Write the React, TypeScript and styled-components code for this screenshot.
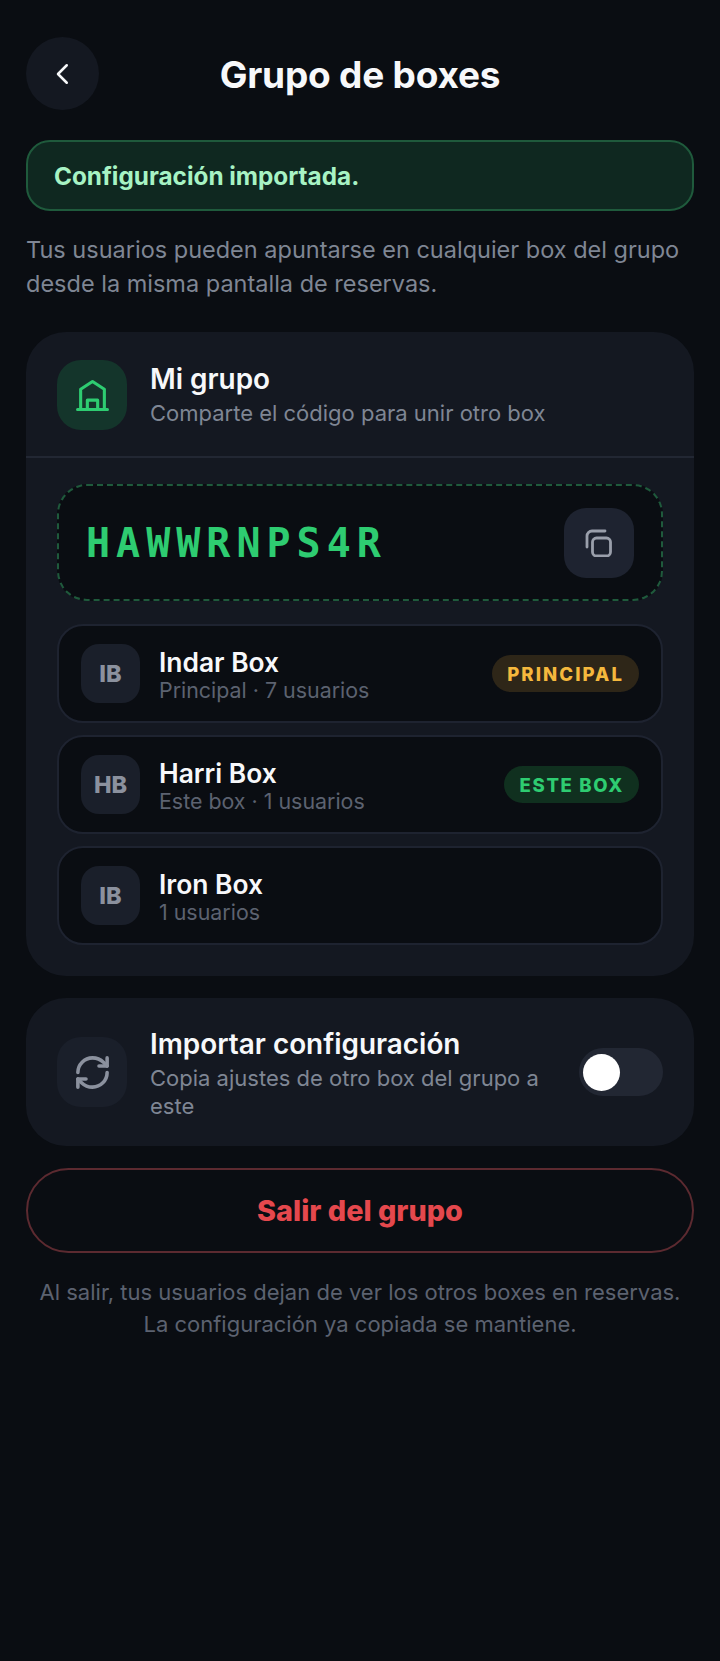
import styled, { createGlobalStyle } from 'styled-components';
import { RefreshCw } from 'lucide-react';

const GlobalStyle = createGlobalStyle`
  html, body {
    margin: 0;
    padding: 0;
    background: #0a0d12;
  }
  * { box-sizing: border-box; }
`;

const Page = styled.div`
  width: 720px;
  min-height: 1661px;
  padding: 37px 26px 0;
  background: #0a0d12;
  font-family: Inter, 'Noto Sans', sans-serif;
  color: #f7f8fa;
`;

const Header = styled.header`
  position: relative;
  display: flex;
  align-items: center;
  justify-content: center;
  height: 73px;
  margin-bottom: 30px;
`;

const BackButton = styled.button`
  position: absolute;
  left: 0;
  top: 0;
  width: 73px;
  height: 73px;
  border: 0;
  border-radius: 50%;
  background: #141821;
  color: #f7f8fa;
  display: flex;
  align-items: center;
  justify-content: center;
  padding: 0;
`;

const Title = styled.h1`
  margin: 0;
  padding-top: 2px;
  font-size: 37px;
  line-height: 48px;
  font-weight: 700;
  letter-spacing: -0.2px;
`;

const Banner = styled.div`
  height: 71px;
  display: flex;
  align-items: center;
  padding: 0 26px;
  border: 2px solid #1f5a3c;
  border-radius: 24px;
  background: #0f2820;
  color: #a7f3c4;
  font-size: 24.3px;
  font-weight: 700;
  margin-bottom: 22px;
`;

const Intro = styled.p`
  margin: 0 0 31px;
  font-size: 23.5px;
  line-height: 34px;
  color: #7f8694;
`;

const Card = styled.section`
  background: #141821;
  border-radius: 40px;
  margin-bottom: 22px;
`;

const CardHead = styled.div`
  display: flex;
  align-items: center;
  gap: 23px;
  padding: 28px 31px 26px;
  border-bottom: 2px solid #222733;
`;

const IconTile = styled.div<{ $tone: 'green' | 'grey' }>`
  flex: none;
  width: 70px;
  height: 70px;
  border-radius: 24px;
  display: flex;
  align-items: center;
  justify-content: center;
  background: ${p => (p.$tone === 'green' ? '#14352b' : '#1a1f2a')};
  color: ${p => (p.$tone === 'green' ? '#2ecc71' : '#8b919e')};
`;

const HeadText = styled.div`
  flex: 1;
  min-width: 0;
`;

const ImportText = styled(HeadText)`
  padding-top: 3px;
`;

const CardTitle = styled.div`
  font-size: 27.9px;
  line-height: 32px;
  font-weight: 600;
  color: #f7f8fa;
`;

const CardSub = styled.div`
  font-size: 22px;
  line-height: 28px;
  color: #7f8694;
  margin-top: 4px;
`;

const CardBody = styled.div`
  padding: 26px 31px 31px;
  display: flex;
  flex-direction: column;
  gap: 12px;
`;

const CodeBox = styled.div`
  height: 117px;
  display: flex;
  align-items: center;
  justify-content: space-between;
  padding: 0 27px;
  margin-bottom: 11px;
  border: 2px dashed #1f5a3c;
  border-radius: 30px;
  background: #0a0d12;
`;

const Code = styled.span`
  font-family: 'DejaVu Sans Mono', 'Liberation Mono', monospace;
  font-size: 40px;
  font-weight: 700;
  letter-spacing: 6px;
  color: #2ecc71;
`;

const CopyButton = styled.button`
  width: 70px;
  height: 70px;
  border: 0;
  padding: 0;
  border-radius: 22px;
  background: #1e2330;
  color: #9a9fab;
  display: flex;
  align-items: center;
  justify-content: center;
`;

const BoxRow = styled.div`
  height: 99px;
  display: flex;
  align-items: center;
  gap: 19px;
  padding: 0 22px;
  border: 2px solid #1e2330;
  border-radius: 26px;
  background: #0a0d12;
`;

const Avatar = styled.div`
  flex: none;
  width: 59px;
  height: 59px;
  border-radius: 18px;
  background: #1a1f2a;
  color: #8b919e;
  font-size: 23.5px;
  font-weight: 800;
  display: flex;
  align-items: center;
  justify-content: center;
`;

const BoxInfo = styled.div`
  flex: 1;
  min-width: 0;
  padding-top: 4px;
`;

const BoxName = styled.div`
  font-size: 26.4px;
  line-height: 30px;
  font-weight: 600;
  color: #f7f8fa;
`;

const BoxMeta = styled.div`
  font-size: 21.4px;
  line-height: 27px;
  color: #5c6270;
`;

const Badge = styled.span<{ $tone: 'amber' | 'green' }>`
  flex: none;
  height: 37px;
  display: flex;
  align-items: center;
  padding: 0 15px;
  border-radius: 19px;
  font-size: 18.5px;
  font-weight: 800;
  letter-spacing: ${p => (p.$tone === 'amber' ? '2.1px' : '1.7px')};
  background: ${p => (p.$tone === 'amber' ? '#2e2618' : '#10301f')};
  color: ${p => (p.$tone === 'amber' ? '#f5b83d' : '#2ecc71')};
`;

const ImportCard = styled(Card)`
  display: flex;
  align-items: center;
  gap: 23px;
  height: 148px;
  padding: 0 31px;
  margin-bottom: 22px;
`;

const Toggle = styled.div`
  flex: none;
  position: relative;
  width: 84px;
  height: 48px;
  border-radius: 24px;
  background: #222733;
`;

const Knob = styled.span`
  position: absolute;
  left: 4px;
  top: 5.5px;
  width: 37px;
  height: 37px;
  border-radius: 50%;
  background: #ffffff;
`;

const LeaveButton = styled.button`
  display: block;
  width: 100%;
  height: 85px;
  border: 2px solid #5c2a30;
  border-radius: 43px;
  background: transparent;
  color: #e5484d;
  font-family: inherit;
  font-size: 28.8px;
  font-weight: 800;
`;

const Footnote = styled.p`
  margin: 23px 0 0;
  text-align: center;
  font-size: 22px;
  line-height: 32px;
  color: #5c6270;
`;

const ChevronLeft = () => (
  <svg width="30" height="30" viewBox="0 0 24 24" fill="none" stroke="currentColor" strokeWidth="2" strokeLinecap="round" strokeLinejoin="round">
    <path d="M15 5l-7 7 7 7" />
  </svg>
);

const WarehouseIcon = () => (
  <svg width="33" height="33" viewBox="0 0 32 32" fill="none" stroke="currentColor" strokeWidth="3" strokeLinecap="round" strokeLinejoin="round">
    <path d="M1.5 29.5h29" />
    <path d="M4.500 29V10L16 2.500 27.500 10V29" />
    <path d="M11 29v-8.500h10V29" />
  </svg>
);

const CopyIcon = () => (
  <svg width="28" height="28" viewBox="0 0 28 28" fill="none" stroke="currentColor" strokeWidth="2.800" strokeLinecap="round" strokeLinejoin="round">
    <rect x="7.500" y="9" width="18" height="18" rx="4" />
    <path d="M2 18V7a5 5 0 0 1 5-5h13" />
  </svg>
);

const boxes = [
  { initials: 'IB', name: 'Indar Box', meta: 'Principal · 7 usuarios', badge: 'PRINCIPAL', tone: 'amber' as const },
  { initials: 'HB', name: 'Harri Box', meta: 'Este box · 1 usuarios', badge: 'ESTE BOX', tone: 'green' as const },
  { initials: 'IB', name: 'Iron Box', meta: '1 usuarios' },
];

export default function App() {
  return (
    <>
      <GlobalStyle />
      <Page>
        <Header>
          <BackButton aria-label="Volver">
            <ChevronLeft />
          </BackButton>
          <Title>Grupo de boxes</Title>
        </Header>

        <Banner>Configuración importada.</Banner>

        <Intro>Tus usuarios pueden apuntarse en cualquier box del grupo desde la misma pantalla de reservas.</Intro>

        <Card>
          <CardHead>
            <IconTile $tone="green">
              <WarehouseIcon />
            </IconTile>
            <HeadText>
              <CardTitle>Mi grupo</CardTitle>
              <CardSub>Comparte el código para unir otro box</CardSub>
            </HeadText>
          </CardHead>
          <CardBody>
            <CodeBox>
              <Code>HAWWRNPS4R</Code>
              <CopyButton aria-label="Copiar">
                <CopyIcon />
              </CopyButton>
            </CodeBox>
            {boxes.map(box => (
              <BoxRow key={box.name}>
                <Avatar>{box.initials}</Avatar>
                <BoxInfo>
                  <BoxName>{box.name}</BoxName>
                  <BoxMeta>{box.meta}</BoxMeta>
                </BoxInfo>
                {box.badge && <Badge $tone={box.tone}>{box.badge}</Badge>}
              </BoxRow>
            ))}
          </CardBody>
        </Card>

        <ImportCard>
          <IconTile $tone="grey">
            <RefreshCw size={39} strokeWidth={2.2} />
          </IconTile>
          <ImportText>
            <CardTitle>Importar configuración</CardTitle>
            <CardSub>Copia ajustes de otro box del grupo a este</CardSub>
          </ImportText>
          <Toggle>
            <Knob />
          </Toggle>
        </ImportCard>

        <LeaveButton>Salir del grupo</LeaveButton>

        <Footnote>
          Al salir, tus usuarios dejan de ver los otros boxes en reservas.
          <br />
          La configuración ya copiada se mantiene.
        </Footnote>
      </Page>
    </>
  );
}
